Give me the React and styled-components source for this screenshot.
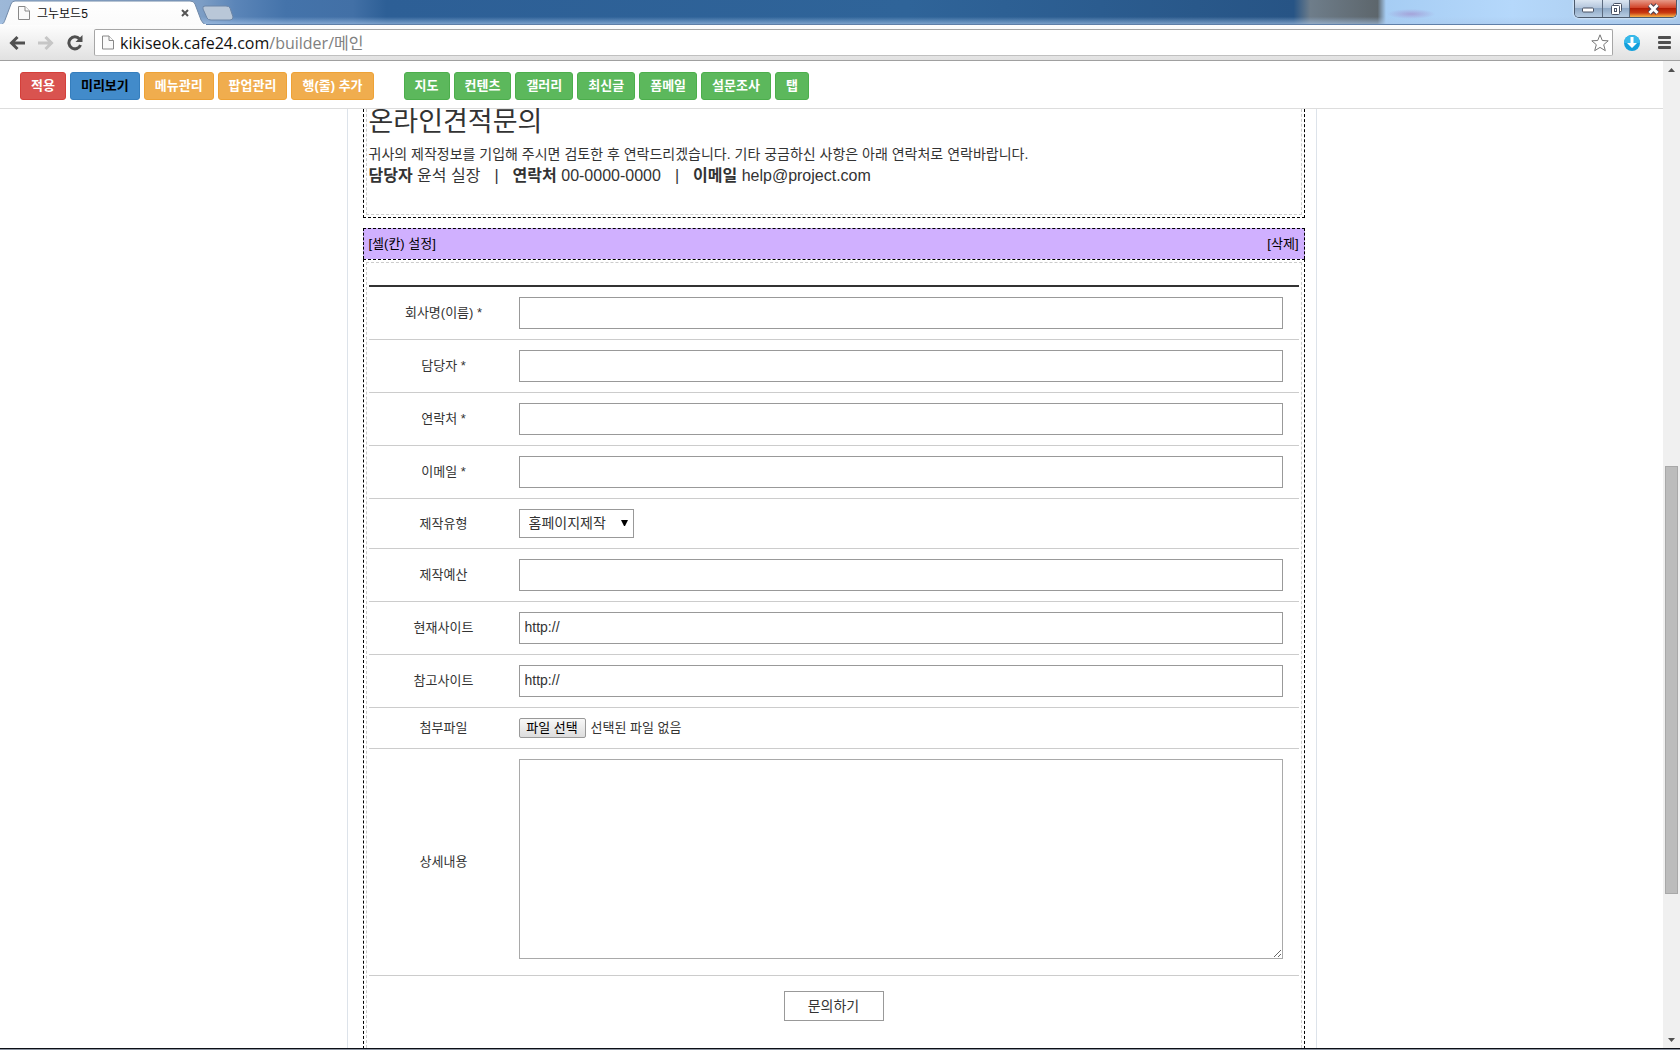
import React, { useState } from "react";
import styled, { createGlobalStyle } from "styled-components";

const GlobalStyle = createGlobalStyle`
  * {
    box-sizing: border-box;
  }
  body {
    margin: 0;
    overflow: hidden;
    color: #333;
    background: #fff;
    font-family: "Liberation Sans", "Noto Sans CJK KR", sans-serif;
    font-size: 13px;
  }
  button, input, select, textarea {
    font-family: inherit;
    color: inherit;
    border-radius: 0;
    outline: none;
  }
`;

const Window = styled.div`
  display: flex;
  flex-direction: column;
  height: 100vh;
`;

/* browser */

const TitleBar = styled.header`
  display: flex;
  justify-content: space-between;
  align-items: flex-start;
  height: 25px;
  flex-shrink: 0;
  border-bottom: 1px solid #5f7fa8;
  background:
    linear-gradient(rgba(255, 255, 255, 0) 70%, rgba(170, 200, 235, 0.6)),
    radial-gradient(ellipse 24px 5px at 84% 14px, rgba(160, 120, 190, 0.5), transparent),
    linear-gradient(
      90deg,
      #9db8d8 0,
      #7c9dc5 12%,
      #5b85b8 14%,
      #4473aa 17%,
      #4270a6 21%,
      #2d5f96 23%,
      #2f6499 54%,
      #275485 77%,
      #6e7d8a 78%,
      #5d666c 82%,
      #a6cdf4 82.5%,
      #b5d8fb 90%,
      #a9c8e8 100%
    );
`;

const Tabs = styled.div`
  display: flex;
  align-items: flex-start;
`;

const Tab = styled.div`
  position: relative;
  display: flex;
  align-items: center;
  width: 206px;
  height: 25px;
  padding: 1px 16px 0 18px;
  color: #111;
  font-size: 12px;
  > svg, > span, > button {
    position: relative;
  }
  > span {
    flex: 1;
    margin-left: 7px;
    padding-bottom: 2px;
  }
`;

const TabShape = styled.svg`
  && {
    position: absolute;
    left: 0;
    top: 0;
  }
`;

const IconButton = styled.button`
  display: flex;
  align-items: center;
  justify-content: center;
  width: ${({ width }) => width || 16}px;
  padding: 0;
  border: 0;
  background: none;
  cursor: pointer;
`;

const NewTab = styled(IconButton)`
  margin: 5px 0 0 -4px;
`;

const WindowButtons = styled.div`
  display: flex;
  margin-right: 3px;
  border: 1px solid #4c5a6c;
  border-top: 0;
  border-radius: 0 0 5px 5px;
  overflow: hidden;
  box-shadow: 0 0 3px #fff;
`;

const WindowButton = styled.button`
  display: flex;
  align-items: center;
  justify-content: center;
  width: ${({ $close }) => ($close ? 47 : 27)}px;
  height: 17px;
  padding: 0;
  border: 0;
  border-left: ${({ $first }) => ($first ? 0 : "1px solid #5c6b80")};
  background: ${({ $close }) =>
    $close
      ? "linear-gradient(#e79a88, #d2452a 45%, #b31d05 50%, #c93a12 75%, #f8b447)"
      : "linear-gradient(#dbe6f2, #b4c6dc 45%, #8fa9c6 50%, #b7cce2)"};
`;

const NavBar = styled.nav`
  display: flex;
  align-items: center;
  flex-shrink: 0;
  height: 36px;
  padding: 4px 8px 4px 9px;
  border-bottom: 1px solid #a0a0a0;
  background: linear-gradient(#fdfdfd, #e1e1e1);
`;

const NavIcons = styled.div`
  display: flex;
  gap: ${({ gap }) => gap}px;
  margin: ${({ side }) => (side === "left" ? "0 11px 0 0" : "0 0 0 10px")};
`;

const AddressBar = styled.div`
  display: flex;
  align-items: center;
  flex: 1;
  height: 27px;
  padding: 0 3px 0 7px;
  border: 1px solid #a6a6a6;
  border-bottom-color: #c0c0c0;
  border-radius: 2px;
  background: #fff;
`;

const Url = styled.div`
  flex: 1;
  margin-left: 6px;
  color: #808080;
  font-family: "Open Sans", "Noto Sans CJK KR", sans-serif;
  font-size: 16px;
  line-height: 24px;
  b {
    color: #111;
    font-weight: 400;
  }
`;

const Viewport = styled.div`
  display: flex;
  flex: 1;
  min-height: 0;
`;

const Page = styled.div`
  flex: 1;
  overflow: hidden;
`;

const Scrollbar = styled.div`
  display: flex;
  flex-direction: column;
  align-items: center;
  width: 17px;
  background: #f0f0f0;
  svg {
    flex: 0 0 17px;
  }
`;

const Track = styled.div`
  flex: ${({ size }) => size};
`;

const Thumb = styled.div`
  flex: 427;
  width: 13px;
  border: 1px solid #a8a8a8;
  background: #bcbcbc;
`;

const Taskbar = styled.footer`
  flex-shrink: 0;
  height: 2px;
  border-top: 1px solid #0c0f16;
  background: #8b93a0;
`;

/* builder toolbar */

const Toolbar = styled.div`
  display: flex;
  gap: 30px;
  padding: 11px 20px 8px;
  border-bottom: 1px solid #ddd;
`;

const ButtonGroup = styled.div`
  display: flex;
  gap: 4px;
`;

const colors = {
  red: ["#d9534f", "#d43f3a"],
  blue: ["#428bca", "#357ebd"],
  orange: ["#f0ad4e", "#eea236"],
  green: ["#5cb85c", "#4cae4c"],
};

const ToolButton = styled.button`
  height: 28px;
  padding: 0 10px 1px;
  border: 1px solid ${({ color }) => colors[color][1]};
  border-radius: 3px;
  background: ${({ color }) => colors[color][0]};
  color: ${({ color }) => (color === "blue" ? "#000" : "#fff")};
  font-size: 13px;
  font-weight: 700;
  line-height: 18px;
  white-space: nowrap;
  cursor: pointer;
`;

/* content */

const Container = styled.main`
  width: 970px;
  max-width: 100%;
  height: 100%;
  margin: 0 auto;
  padding: 0 11px 0 15px;
  border: solid #dde3ea;
  border-width: 0 1px;
`;

const Cell = styled.section`
  border: 1px dashed #000;
  border-top: ${({ $open }) => ($open ? 0 : "1px dashed #000")};
  padding: ${({ $open }) => ($open ? "0 2px 2px" : "2px 2px 0")};
  margin-bottom: 10px;
`;

const CellInner = styled.div`
  border: 1px dashed #ccc;
  border-top: ${({ $open }) => ($open ? 0 : "1px dashed #ccc")};
  padding: ${({ $open }) => ($open ? "0 2px 28px" : "22px 2px 36px")};
`;

const CellHeader = styled.div`
  display: flex;
  justify-content: space-between;
  align-items: center;
  height: 31px;
  padding: 0 5px 3px;
  border: 1px dashed #000;
  border-bottom: 0;
  background: #d0b0ff;
  a {
    color: #000;
    text-decoration: none;
  }
`;

const Title = styled.h1`
  margin: 0;
  padding-bottom: 9px;
  font-size: 27px;
  font-weight: 400;
  line-height: 26px;
`;

const Text = styled.p`
  margin: 0;
  font-size: ${({ size }) => size}px;
  line-height: 21px;
`;

const Divider = styled.span`
  margin: 0 14px;
`;

const FormTable = styled.table`
  width: 100%;
  border-collapse: separate;
  border-spacing: 0;
  border-top: 2px solid #333;
  th {
    width: 150px;
    padding: 0 0 3px;
    border-bottom: 1px solid #ccc;
    font-weight: 400;
    text-align: center;
  }
  td {
    padding: 10px 16px 10px 0;
    border-bottom: 1px solid #ccc;
  }
`;

const Input = styled.input`
  display: block;
  width: 100%;
  height: 32px;
  padding: 0 5px 2px;
  border: 1px solid #999;
  background: #fff;
  font-size: 14px;
`;

const TextArea = styled.textarea`
  display: block;
  width: 100%;
  height: 200px;
  margin-bottom: 6px;
  padding: 5px;
  border: 1px solid #a9a9a9;
  font-size: 14px;
`;

const SelectWrap = styled.div`
  position: relative;
  width: 115px;
  svg {
    position: absolute;
    right: 6px;
    top: 11px;
    pointer-events: none;
  }
`;

const Select = styled.select`
  display: block;
  appearance: none;
  width: 100%;
  height: 29px;
  padding: 0 0 2px 9px;
  border: 1px solid #999;
  background: #fff;
  font-size: 14px;
`;

const FileLabel = styled.label`
  display: flex;
  align-items: center;
  gap: 5px;
  height: 20px;
  line-height: 18px;
  input {
    position: absolute;
    width: 1px;
    height: 1px;
    opacity: 0;
  }
`;

const FileButton = styled.span`
  width: 67px;
  height: 20px;
  border: 1px solid #999;
  border-radius: 2px;
  background: linear-gradient(#f8f8f8, #ddd);
  color: #000;
  text-align: center;
`;

const Submit = styled.button`
  display: block;
  width: 100px;
  height: 30px;
  margin: 15px auto 0;
  padding: 0 0 2px;
  border: 1px solid #999;
  background: #fff;
  font-size: 14px;
  cursor: pointer;
`;

const PageIcon = ({ width = 12, height = 14 }) => (
  <svg width={width} height={height} viewBox="0 0 12 14" fill="#fafafa" stroke="#888">
    <path d="M.5.5h6.5l4.5 4.5v8.5h-11z" />
    <path d="M7 .5v4.500h4.500" />
  </svg>
);

const Arrow = ({ down }) => (
  <svg width="7" height="17" viewBox="0 0 7 17">
    <path d={down ? "M0 7h7L3.500 11z" : "M0 11h7L3.500 7z"} fill="#505050" />
  </svg>
);

const tools = [
  ["적용", "red"],
  ["미리보기", "blue"],
  ["메뉴관리", "orange"],
  ["팝업관리", "orange"],
  ["행(줄) 추가", "orange"],
];

const widgets = ["지도", "컨텐츠", "갤러리", "최신글", "폼메일", "설문조사", "탭"];

const fields = [
  { id: "company", label: "회사명(이름) *" },
  { id: "manager", label: "담당자 *" },
  { id: "phone", label: "연락처 *" },
  { id: "email", label: "이메일 *" },
  { id: "type", label: "제작유형", kind: "select" },
  { id: "budget", label: "제작예산" },
  { id: "site", label: "현재사이트", value: "http://" },
  { id: "refer", label: "참고사이트", value: "http://" },
  { id: "file", label: "첨부파일", kind: "file" },
  { id: "detail", label: "상세내용", kind: "textarea" },
];

function Field({ id, kind, value }) {
  const [fileName, setFileName] = useState("선택된 파일 없음");
  if (kind === "select") {
    return (
      <SelectWrap>
        <Select id={id}>
          <option>홈페이지제작</option>
        </Select>
        <svg width="7" height="7" viewBox="0 0 7 7">
          <path d="M0 0h7L4 6H3z" fill="#000" />
        </svg>
      </SelectWrap>
    );
  }
  if (kind === "file") {
    return (
      <FileLabel>
        <input
          type="file"
          id={id}
          onChange={(e) => setFileName(e.target.files[0].name)}
        />
        <FileButton>파일 선택</FileButton>
        <span>{fileName}</span>
      </FileLabel>
    );
  }
  if (kind === "textarea") {
    return <TextArea id={id} />;
  }
  return <Input type="text" id={id} defaultValue={value} />;
}

function BrowserHeader() {
  return (
    <>
      <TitleBar>
        <Tabs>
          <Tab>
            <TabShape width="206" height="25">
              <defs>
                <linearGradient id="tab" x1="0" y1="0" x2="0" y2="1">
                  <stop offset="0" stopColor="#fff" />
                  <stop offset="1" stopColor="#fbfbfb" />
                </linearGradient>
              </defs>
              <path
                d="M0 25C4 24 4 22 5 20L11 4Q12 1 15 1H190Q194 1 195 4L201 20Q203 24 206 25z"
                fill="url(#tab)"
                stroke="#7089a8"
              />
              <path d="M0 25h206" stroke="#fbfbfb" strokeWidth="2" />
            </TabShape>
            <PageIcon />
            <span>그누보드5</span>
            <IconButton width="10" aria-label="탭 닫기">
              <svg width="8" height="8" stroke="#555" strokeWidth="2">
                <path d="M1 1l6 6M7 1l-6 6" />
              </svg>
            </IconButton>
          </Tab>
          <NewTab width="32" aria-label="새 탭">
            <svg width="32" height="16">
              <path
                d="M3 1H24Q27 1 28 3L31 12Q31 15 28 15H9Q6 15 5 13L1 4Q0 1 3 1z"
                fill="#b9c7d8"
                stroke="#6c86a8"
              />
            </svg>
          </NewTab>
        </Tabs>
        <WindowButtons>
          <WindowButton $first aria-label="최소화">
            <svg width="13" height="8">
              <rect x=".5" y="3" width="11" height="4" rx="1" fill="#fff" stroke="#4a5365" />
            </svg>
          </WindowButton>
          <WindowButton aria-label="이전 크기로">
            <svg width="13" height="14" fill="#fff" stroke="#4a5365">
              <rect x="3.500" y="1.500" width="8" height="8" rx="1" />
              <rect x="1.500" y="3.500" width="8" height="9" rx="1" />
              <rect x="4.500" y="6.500" width="2" height="3" />
            </svg>
          </WindowButton>
          <WindowButton $close aria-label="닫기">
            <svg width="13" height="12" fill="none">
              <path d="M2.500 2l8 8M10.500 2l-8 8" stroke="#4a4050" strokeWidth="5" />
              <path d="M2.500 2l8 8M10.500 2l-8 8" stroke="#fff" strokeWidth="3" />
            </svg>
          </WindowButton>
        </WindowButtons>
      </TitleBar>
      <NavBar>
        <NavIcons gap={13} side="left">
          <IconButton aria-label="뒤로">
            <svg width="16" height="16" fill="none" stroke="#505050" strokeWidth="3">
              <path d="M2.500 8H16M8.500 2L2.500 8l6 6" />
            </svg>
          </IconButton>
          <IconButton aria-label="앞으로">
            <svg width="16" height="16" fill="none" stroke="#c6c6c6" strokeWidth="3">
              <path d="M0 8h13.500M7.500 2l6 6-6 6" />
            </svg>
          </IconButton>
          <IconButton aria-label="새로고침">
            <svg width="16" height="16" fill="none" stroke="#505050" strokeWidth="3">
              <path d="M12.500 4A6 6 0 1 0 13.500 10" />
              <path d="M15.500 0v7H8.500z" fill="#505050" stroke="none" />
            </svg>
          </IconButton>
        </NavIcons>
        <AddressBar>
          <PageIcon width={12} height={15} />
          <Url>
            <b>kikiseok.cafe24.com</b>/builder/메인
          </Url>
          <IconButton width="18" aria-label="북마크">
            <svg width="18" height="18" viewBox="0 0 18 18" fill="#fff" stroke="#777" strokeLinejoin="round">
              <path d="M9 .8L11.300 6.500l5.900.3-4.500 3.900 1.600 6L9 13.400l-5.300 3.300 1.600-6L.8 6.800l5.900-.3z" />
            </svg>
          </IconButton>
        </AddressBar>
        <NavIcons gap={17} side="right">
          <IconButton width="18" aria-label="다운로드">
            <svg width="18" height="18">
              <circle cx="9" cy="9" r="8" fill="#12a0dc" />
              <path d="M1 9a8 8 0 0 1 16 0z" fill="#37b9ea" />
              <path d="M7.500 3h3v6H14l-5 5-5-5h3.500z" fill="#fff" />
            </svg>
          </IconButton>
          <IconButton width="14" aria-label="메뉴">
            <svg width="14" height="14" fill="#505050">
              <rect y="0" width="13" height="3" rx="1" />
              <rect y="5" width="13" height="3" rx="1" />
              <rect y="10" width="13" height="3" rx="1" />
            </svg>
          </IconButton>
        </NavIcons>
      </NavBar>
    </>
  );
}

function App() {
  return (
    <Window>
      <GlobalStyle />
      <BrowserHeader />
      <Viewport>
        <Page>
          <Toolbar>
            <ButtonGroup>
              {tools.map(([name, color]) => (
                <ToolButton key={name} color={color}>
                  {name}
                </ToolButton>
              ))}
            </ButtonGroup>
            <ButtonGroup>
              {widgets.map((name) => (
                <ToolButton key={name} color="green">
                  {name}
                </ToolButton>
              ))}
            </ButtonGroup>
          </Toolbar>
          <Container>
            <Cell $open>
              <CellInner $open>
                <Title>온라인견적문의</Title>
                <Text size={14}>
                  귀사의 제작정보를 기입해 주시면 검토한 후 연락드리겠습니다. 기타
                  궁금하신 사항은 아래 연락처로 연락바랍니다.
                </Text>
                <Text size={16}>
                  <b>담당자</b> 윤석 실장<Divider>|</Divider>
                  <b>연락처</b> 00-0000-0000<Divider>|</Divider>
                  <b>이메일</b> help@project.com
                </Text>
              </CellInner>
            </Cell>
            <CellHeader>
              <a href="#cell">[셀(칸) 설정]</a>
              <a href="#delete">[삭제]</a>
            </CellHeader>
            <Cell>
              <CellInner>
                <FormTable>
                  <tbody>
                    {fields.map((field) => (
                      <tr key={field.id}>
                        <th scope="row">
                          <label htmlFor={field.id}>{field.label}</label>
                        </th>
                        <td>
                          <Field {...field} />
                        </td>
                      </tr>
                    ))}
                  </tbody>
                </FormTable>
                <Submit>문의하기</Submit>
              </CellInner>
            </Cell>
          </Container>
        </Page>
        <Scrollbar>
          <Arrow />
          <Track size={389} />
          <Thumb />
          <Track size={137} />
          <Arrow down />
        </Scrollbar>
      </Viewport>
      <Taskbar />
    </Window>
  );
}

export default App;
